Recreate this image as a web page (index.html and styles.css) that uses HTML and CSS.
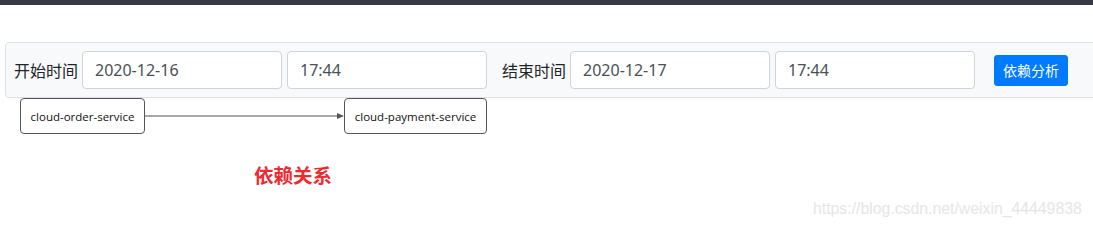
FILE: index.html
```html
<!DOCTYPE html>
<html>
<head>
  <meta charset="utf-8">
  <title>依赖分析</title>
  <link rel="stylesheet" href="styles.css">
</head>
<body>
  <div class="topbar"></div>

  <div class="query-wrap">
    <form class="query">
      <label class="query-label" for="start-date">开始时间</label>
      <input type="text" id="start-date" class="form-control" value="2020-12-16">
      <input type="text" id="start-time" class="form-control" value="17:44">

      <label class="query-label gap-left" for="end-date">结束时间</label>
      <input type="text" id="end-date" class="form-control" value="2020-12-17">
      <input type="text" id="end-time" class="form-control" value="17:44">

      <button type="button" class="btn-primary">依赖分析</button>
    </form>
  </div>

  <div class="graph">
    <svg class="edges" width="1093" height="40">
      <line x1="144" y1="18" x2="340" y2="18" stroke="#8c8c8c" stroke-width="1.5"/>
      <polygon points="344,18 337,15 337,21" fill="#555"/>
    </svg>
    <div class="node node-order">cloud-order-service</div>
    <div class="node node-payment">cloud-payment-service</div>
    <div class="graph-title">依赖关系</div>
    <div class="watermark">https://blog.csdn.net/weixin_44449838</div>
  </div>
</body>
</html>
```

FILE: styles.css
```css
:root {
  --primary: #007bff;
  --border: #dee2e6;
  --input-border: #ced4da;
  --text: #212529;
  --input-text: #495057;
}

html, body {
  overflow: hidden;
}

body {
  margin: 0;
  font-family: "Noto Sans", "Noto Sans CJK SC", sans-serif;
  color: var(--text);
  background: #fff;
}

.topbar {
  height: 5px;
  background-color: #343a40;
}

.query-wrap {
  padding: 37px 0 0 5px;
}

.query {
  display: flex;
  align-items: center;
  width: 1100px;
  padding: 8px;
  background-color: #f8f9fa;
  border: 1px solid var(--border);
  border-radius: 4px;
}

.query-label {
  font-family: "Noto Sans CJK SC", sans-serif;
  font-size: 16px;
  color: var(--text);
  margin-right: 4px;
  line-height: 1;
}

.query-label.gap-left {
  margin-left: 10px;
}

.form-control {
  box-sizing: border-box;
  width: 200px;
  height: 38px;
  padding: 6px 12px;
  margin-right: 5px;
  font-family: "Noto Sans", "Noto Sans CJK SC", sans-serif;
  font-size: 16px;
  color: var(--input-text);
  background-color: #fff;
  border: 1px solid var(--input-border);
  border-radius: 4px;
  outline: none;
}

.btn-primary {
  margin-left: 14px;
  height: 31px;
  padding: 0 8px;
  font-family: "Noto Sans CJK SC", sans-serif;
  font-size: 14px;
  color: #fff;
  background-color: var(--primary);
  border: 1px solid var(--primary);
  border-radius: 3px;
  cursor: pointer;
}

.graph {
  position: relative;
  height: 130px;
}

.edges {
  position: absolute;
  left: 0;
  top: 0;
}

.node {
  position: absolute;
  top: 0;
  box-sizing: border-box;
  height: 36px;
  display: flex;
  align-items: center;
  justify-content: center;
  font-family: "Open Sans", "Noto Sans", sans-serif;
  font-size: 11.5px;
  color: #111;
  background: #fff;
  border: 1px solid #555;
  border-radius: 4px;
}

.node-order {
  left: 20px;
  width: 125px;
}

.node-payment {
  left: 344px;
  width: 143px;
}

.graph-title {
  position: absolute;
  left: 254px;
  top: 65px;
  font-family: "Noto Sans CJK SC", sans-serif;
  font-size: 19.5px;
  font-weight: bold;
  line-height: 1.2;
  color: #ee2a30;
}

.watermark {
  position: absolute;
  left: 813px;
  top: 102px;
  font-family: "Liberation Sans", Arial, sans-serif;
  font-size: 15.8px;
  color: #e6e6e6;
}
```
